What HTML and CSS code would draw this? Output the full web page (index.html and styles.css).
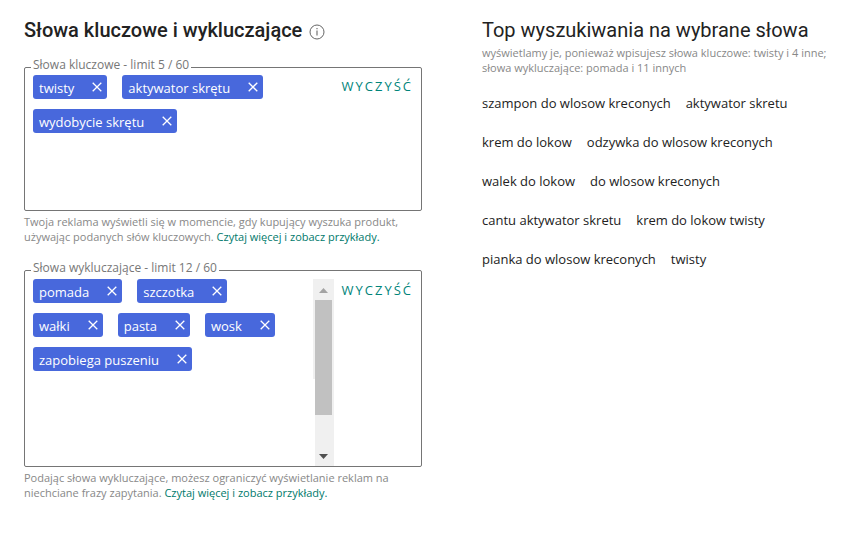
FILE: index.html
```html
<!DOCTYPE html>
<html lang="pl">
<head>
<meta charset="utf-8">
<meta name="viewport" content="width=device-width, initial-scale=1">
<title>Słowa kluczowe i wykluczające</title>
<link rel="stylesheet" href="styles.css">
</head>
<body>
<svg class="sprite" aria-hidden="true">
  <symbol id="close" viewBox="0 0 10 10"><path d="M0.7 0.7 9.3 9.3M9.3 0.7 0.7 9.3" fill="none" stroke="currentColor" stroke-width="1.3"/></symbol>
</svg>
<main class="page">
  <section class="keywords">
    <h1 class="title">Słowa kluczowe i wykluczające
      <button class="info" type="button" aria-label="Informacje"><svg viewBox="0 0 16 16" width="16" height="16"><circle cx="8" cy="8" r="7" fill="none" stroke="currentColor"/><path d="M8 6.5V11.5M8 4V5.3" stroke="currentColor" stroke-width="1.1"/></svg></button>
    </h1>

    <fieldset class="box">
      <legend class="legend">Słowa kluczowe - limit 5 / 60</legend>
      <div class="content">
        <ul class="chips">
          <li class="chip">twisty<button class="remove" type="button" aria-label="Usuń twisty"><svg><use href="#close"/></svg></button></li>
          <li class="chip">aktywator skrętu<button class="remove" type="button" aria-label="Usuń aktywator skrętu"><svg><use href="#close"/></svg></button></li>
          <li class="chip">wydobycie skrętu<button class="remove" type="button" aria-label="Usuń wydobycie skrętu"><svg><use href="#close"/></svg></button></li>
        </ul>
        <button class="clear" type="button">WYCZYŚĆ</button>
      </div>
    </fieldset>
    <p class="hint">Twoja reklama wyświetli się w momencie, gdy kupujący wyszuka produkt, używając podanych słów kluczowych. <a class="link" href="#">Czytaj więcej i zobacz przykłady.</a></p>

    <fieldset class="box">
      <legend class="legend">Słowa wykluczające - limit 12 / 60</legend>
      <div class="content content-tall">
        <ul class="chips">
          <li class="chip">pomada<button class="remove" type="button" aria-label="Usuń pomada"><svg><use href="#close"/></svg></button></li>
          <li class="chip">szczotka<button class="remove" type="button" aria-label="Usuń szczotka"><svg><use href="#close"/></svg></button></li>
          <li class="chip">wałki<button class="remove" type="button" aria-label="Usuń wałki"><svg><use href="#close"/></svg></button></li>
          <li class="chip">pasta<button class="remove" type="button" aria-label="Usuń pasta"><svg><use href="#close"/></svg></button></li>
          <li class="chip">wosk<button class="remove" type="button" aria-label="Usuń wosk"><svg><use href="#close"/></svg></button></li>
          <li class="chip">zapobiega puszeniu<button class="remove" type="button" aria-label="Usuń zapobiega puszeniu"><svg><use href="#close"/></svg></button></li>
        </ul>
        <div class="scrollbar" aria-hidden="true">
          <svg class="arrow arrow-up" viewBox="0 0 9 5"><path d="M0 5 4.5 0 9 5Z" fill="currentColor"/></svg>
          <div class="thumb"></div>
          <svg class="arrow arrow-down" viewBox="0 0 9 5"><path d="M0 0H9L4.5 5Z" fill="currentColor"/></svg>
        </div>
        <button class="clear" type="button">WYCZYŚĆ</button>
      </div>
    </fieldset>
    <p class="hint">Podając słowa wykluczające, możesz ograniczyć wyświetlanie reklam na niechciane frazy zapytania. <a class="link" href="#">Czytaj więcej i zobacz przykłady.</a></p>
  </section>

  <section class="top">
    <h2 class="title title-light">Top wyszukiwania na wybrane słowa</h2>
    <p class="note">wyświetlamy je, ponieważ wpisujesz słowa kluczowe: twisty i 4 inne; słowa wykluczające: pomada i 11 innych</p>
    <ul class="searches">
      <li>szampon do wlosow kreconych</li>
      <li>aktywator skretu</li>
      <li>krem do lokow</li>
      <li>odzywka do wlosow kreconych</li>
      <li>walek do lokow</li>
      <li>do wlosow kreconych</li>
      <li>cantu aktywator skretu</li>
      <li>krem do lokow twisty</li>
      <li>pianka do wlosow kreconych</li>
      <li>twisty</li>
    </ul>
  </section>
</main>
</body>
</html>
```

FILE: styles.css
```css
* {
  box-sizing: border-box;
}

body {
  margin: 0;
  background: #fff;
  color: #222;
  font: 13px/18px "Open Sans", "Noto Sans", sans-serif;
}

ul {
  margin: 0;
  padding: 0;
  list-style: none;
}

button {
  margin: 0;
  padding: 0;
  border: 0;
  background: none;
  font: inherit;
  cursor: pointer;
}

.sprite {
  display: none;
}

.page {
  display: grid;
  grid-template-columns: 398fr 353fr;
  column-gap: 60px;
  padding: 18px 13px 24px 24px;
}

.title {
  display: flex;
  align-items: center;
  gap: 7px;
  margin: 0;
  font: 500 20px/24px Roboto, sans-serif;
}

.title-light {
  font-weight: 400;
}

.info {
  height: 16px;
  margin-top: 4px;
  color: #666;
}

.info svg {
  display: block;
}

.box {
  min-width: 0;
  min-height: 152px;
  margin: 17px 0 0;
  padding: 0 8px;
  border: 1px solid #757575;
  border-radius: 2px;
}

.hint + .box {
  margin-top: 18px;
}

.legend {
  margin-left: -2px;
  padding: 0 2px 4px;
  color: #777;
  font-size: 12px;
  line-height: 12px;
}

.content {
  display: flex;
}

.content-tall {
  min-height: 188px;
  padding-top: 1px;
}

.chips {
  display: flex;
  flex: 1;
  flex-wrap: wrap;
  align-content: flex-start;
}

.chip {
  display: flex;
  height: 24px;
  margin: 0 15px 10px 0;
  padding: 0 5px 0 6px;
  border-radius: 3px;
  background: #4868dc;
  color: #fff;
  line-height: 26px;
}

.remove {
  width: 10px;
  height: 23px;
  margin-left: 18px;
  color: #fff;
}

.remove svg {
  display: block;
  width: 10px;
  height: 10px;
}

/* The track is two pixels wider along its first 100 pixels. */
.scrollbar {
  display: flex;
  flex-direction: column;
  width: 21px;
  padding: 9px 2px 7px;
  background:
    linear-gradient(#f0f0f0, #f0f0f0) 0 0 / 2px 100px no-repeat,
    linear-gradient(#f0f0f0, #f0f0f0) 2px 0 / 19px 100% no-repeat;
}

.arrow {
  flex: none;
  align-self: center;
  width: 9px;
  height: 5px;
}

.arrow-up {
  color: #a3a3a3;
}

.arrow-down {
  margin-top: auto;
  color: #505050;
}

.thumb {
  height: 115px;
  margin-top: 7px;
  background: #c1c1c1;
}

.clear {
  align-self: flex-start;
  margin-left: 8px;
  color: #00847a;
  letter-spacing: 2px;
  line-height: 22px;
}

.hint,
.note {
  margin: 3px 0 0;
  color: #888;
  font-size: 11px;
  line-height: 15px;
}

.link {
  color: #00796b;
  text-decoration: none;
}

.searches {
  display: flex;
  flex-wrap: wrap;
  gap: 21px 15px;
  margin-top: 19px;
}
```
